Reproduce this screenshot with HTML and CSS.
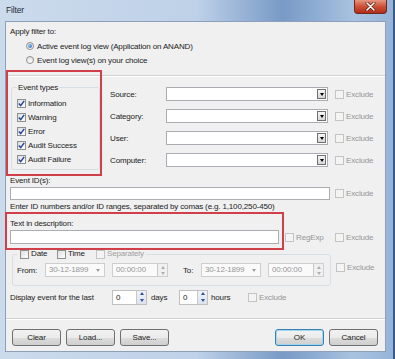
FILE: index.html
```html
<!DOCTYPE html>
<html>
	<head>
		<meta charset="utf-8" />
		<link rel="stylesheet" href="styles.css">
	</head>
	<body>
		<div class="window">
			<div class="titlebar">
				<span class="title">Filter</span>
				<span class="close">
					<svg width="11" height="9" viewBox="0 0 11 9">
						<path d="M2 1 L9 8 M9 1 L2 8" stroke="#5a1a10" stroke-width="3" stroke-linecap="round" />
						<path d="M2 1 L9 8 M9 1 L2 8" stroke="#ffffff" stroke-width="1.6" stroke-linecap="round" />
					</svg>
				</span>
			</div>

			<div class="client">
				<div class="apply">
					<div class="apply-label">Apply filter to:</div>
					<div class="radio-row"><span class="radio on"></span>Active event log view (Application on ANAND)</div>
					<div class="radio-row"><span class="radio"></span>Event log view(s) on your choice</div>
				</div>
				<div class="sep"></div>

				<div class="criteria">
					<fieldset class="types">
						<legend>Event types</legend>
						<div class="check-row"><span class="cb on"><svg width="7" height="7" viewBox="0 0 7 7"><path d="M0.8 3.6 L2.7 5.6 L6.2 0.9" /></svg></span>Information</div>
						<div class="check-row"><span class="cb on"><svg width="7" height="7" viewBox="0 0 7 7"><path d="M0.8 3.6 L2.7 5.6 L6.2 0.9" /></svg></span>Warning</div>
						<div class="check-row"><span class="cb on"><svg width="7" height="7" viewBox="0 0 7 7"><path d="M0.8 3.6 L2.7 5.6 L6.2 0.9" /></svg></span>Error</div>
						<div class="check-row"><span class="cb on"><svg width="7" height="7" viewBox="0 0 7 7"><path d="M0.8 3.6 L2.7 5.6 L6.2 0.9" /></svg></span>Audit Success</div>
						<div class="check-row"><span class="cb on"><svg width="7" height="7" viewBox="0 0 7 7"><path d="M0.8 3.6 L2.7 5.6 L6.2 0.9" /></svg></span>Audit Failure</div>
					</fieldset>

					<div class="fields">
						<div class="field-row">
							<span class="flabel">Source:</span>
							<span class="combo"><span class="drop"></span></span>
							<span class="excl"><span class="cb dis"></span>Exclude</span>
						</div>
						<div class="field-row">
							<span class="flabel">Category:</span>
							<span class="combo"><span class="drop"></span></span>
							<span class="excl"><span class="cb dis"></span>Exclude</span>
						</div>
						<div class="field-row">
							<span class="flabel">User:</span>
							<span class="combo"><span class="drop"></span></span>
							<span class="excl"><span class="cb dis"></span>Exclude</span>
						</div>
						<div class="field-row">
							<span class="flabel">Computer:</span>
							<span class="combo"><span class="drop"></span></span>
							<span class="excl"><span class="cb dis"></span>Exclude</span>
						</div>
					</div>
				</div>

				<div class="section">
					<div class="line-label id-label">Event ID(s):</div>
					<div class="input-row">
						<span class="textbox id-box"></span>
						<span class="excl"><span class="cb dis"></span>Exclude</span>
					</div>
					<div class="line-label">Enter ID numbers and/or ID ranges, separated by comas (e.g. 1,100,250-450)</div>
					<div class="line-label desc-label">Text in description:</div>
					<div class="input-row">
						<span class="textbox desc-box"></span>
						<span class="regexp"><span class="cb dis"></span>RegExp</span>
						<span class="excl"><span class="cb dis"></span>Exclude</span>
					</div>
				</div>

				<div class="date-row">
					<fieldset class="dates">
						<legend>
							<span class="leg-item w-date"><span class="cb"></span>Date</span>
							<span class="leg-item w-time"><span class="cb"></span>Time</span>
							<span class="leg-item muted"><span class="cb dis"></span>Separately</span>
						</legend>
						<div class="range-row">
							<span class="rlabel">From:</span>
							<span class="datebox">30-12-1899<span class="tri"></span></span>
							<span class="timebox">00:00:00<span class="spin gray"><span class="up"></span><span class="down"></span></span></span>
							<span class="rlabel to">To:</span>
							<span class="datebox">30-12-1899<span class="tri"></span></span>
							<span class="timebox">00:00:00<span class="spin gray"><span class="up"></span><span class="down"></span></span></span>
						</div>
					</fieldset>
					<span class="excl date-excl"><span class="cb dis"></span>Exclude</span>
				</div>

				<div class="last-row">
					<span class="last-label">Display event for the last</span>
					<span class="spinbox days">0<span class="spin"><span class="up"></span><span class="down"></span></span></span>
					<span class="unit">days</span>
					<span class="spinbox hours">0<span class="spin"><span class="up"></span><span class="down"></span></span></span>
					<span class="unit hours-unit">hours</span>
					<span class="excl muted-excl"><span class="cb dis"></span>Exclude</span>
				</div>

				<div class="sep sep-bottom"></div>

				<div class="buttons">
					<span class="button">Clear</span>
					<span class="button">Load...</span>
					<span class="button">Save...</span>
					<span class="spacer"></span>
					<span class="button default">OK</span>
					<span class="button">Cancel</span>
				</div>
			</div>

			<div class="mark mark-types"></div>
			<div class="mark mark-desc"></div>
		</div>
	</body>
</html>
```

FILE: styles.css
```css
html,
body {
	margin: 0;
	padding: 0;
}
body {
	width: 395px;
	height: 359px;
	overflow: hidden;
	font-family: 'Liberation Sans', Arial, sans-serif;
	font-size: 8px;
	letter-spacing: -0.15px;
	color: #222;
}
.window {
	position: relative;
	width: 395px;
	height: 359px;
	box-sizing: border-box;
	padding: 0 7px 7px 5px;
	display: flex;
	flex-direction: column;
	background: linear-gradient(
		to right,
		rgb(204, 219, 236) 0%,
		rgb(190, 209, 232) 50%,
		rgb(120, 154, 198) 72%,
		rgb(168, 194, 224) 90%,
		rgb(150, 180, 216) 100%
	);
	border-right: 2px solid rgb(60, 92, 140);
}
.titlebar {
	height: 21px;
	display: flex;
	align-items: flex-start;
}
.title {
	padding: 4px 0 0 1px;
	line-height: 12px;
	font-size: 8.5px;
	color: #1e2a3a;
}
.close {
	margin-left: auto;
	margin-right: -1px;
	width: 33px;
	height: 14px;
	box-sizing: border-box;
	display: flex;
	align-items: center;
	justify-content: center;
	border: 1px solid rgb(110, 40, 30);
	border-top: none;
	border-radius: 0 0 4px 4px;
	background: linear-gradient(rgb(230, 150, 130), rgb(205, 80, 55) 50%, rgb(180, 45, 25));
}

.client {
	flex: 1;
	box-sizing: border-box;
	border: 1px solid rgb(140, 160, 188);
	background-color: rgb(240, 240, 240);
	display: flex;
	flex-direction: column;
}

.apply {
	padding: 2px 0 0 4px;
}
.apply-label {
	line-height: 15px;
	height: 15px;
}
.radio-row {
	display: flex;
	align-items: center;
	height: 14px;
	padding-left: 16px;
}
.radio {
	width: 8px;
	height: 8px;
	box-sizing: border-box;
	border-radius: 50%;
	border: 1px solid rgb(140, 140, 140);
	background: linear-gradient(rgb(225, 225, 225), rgb(255, 255, 255));
	margin-right: 3px;
	display: flex;
	align-items: center;
	justify-content: center;
}
.radio.on::after {
	content: '';
	width: 4px;
	height: 4px;
	border-radius: 50%;
	background: radial-gradient(circle at 35% 35%, rgb(140, 200, 250), rgb(30, 90, 170));
}

.sep {
	margin-top: 8px;
	height: 1px;
	border-top: 1px solid rgb(208, 208, 208);
	background-color: #fff;
}

.criteria {
	display: flex;
	padding-left: 5px;
}
fieldset {
	margin: 0;
	border: 1px solid rgb(213, 223, 229);
	border-radius: 3px;
	box-sizing: border-box;
}
legend {
	padding: 0 1px;
	line-height: 13px;
	height: 13px;
}
.types {
	margin-top: 4px;
	width: 89px;
	padding: 2px 2px 3px 5px;
}
.check-row {
	display: flex;
	align-items: center;
	height: 14px;
	white-space: nowrap;
}
.cb {
	flex: none;
	width: 9px;
	height: 9px;
	box-sizing: border-box;
	border: 1px solid rgb(142, 143, 143);
	background: linear-gradient(135deg, rgb(220, 222, 226), rgb(255, 255, 255));
	margin-right: 2px;
	display: flex;
	align-items: center;
	justify-content: center;
}
.cb svg path {
	fill: none;
	stroke: rgb(40, 70, 150);
	stroke-width: 1.5;
}
.cb.dis {
	border-color: rgb(196, 196, 196);
	background: rgb(244, 244, 244);
}

.fields {
	margin-left: 10px;
	padding-top: 10px;
	display: flex;
	flex-direction: column;
	gap: 8px;
}
.field-row {
	display: flex;
	align-items: center;
	height: 14px;
}
.flabel {
	width: 56px;
}
.combo {
	width: 162px;
	height: 14px;
	box-sizing: border-box;
	border: 1px solid rgb(171, 173, 179);
	background-color: #fff;
	display: flex;
	justify-content: flex-end;
	align-items: center;
	padding-right: 1px;
}
.drop {
	width: 9px;
	height: 10px;
	box-sizing: border-box;
	border: 1px solid rgb(112, 112, 112);
	background: linear-gradient(rgb(245, 245, 245), rgb(214, 214, 214));
	display: flex;
	align-items: center;
	justify-content: center;
}
.drop::after {
	content: '';
	border-left: 2.5px solid transparent;
	border-right: 2.5px solid transparent;
	border-top: 3px solid #000;
}
.excl {
	display: flex;
	align-items: center;
	margin-left: 7px;
	color: rgb(150, 150, 150);
}

.section {
	padding-left: 4px;
}
.line-label {
	line-height: 13px;
	height: 13px;
	white-space: nowrap;
}
.id-label,
.desc-label {
	margin-top: 4px;
}
.input-row {
	display: flex;
	align-items: center;
}
.textbox {
	box-sizing: border-box;
	border: 1px solid rgb(171, 173, 179);
	background-color: #fff;
}
.id-box {
	width: 320px;
	height: 13px;
}
.id-box + .excl {
	margin-left: 5px;
}
.desc-box {
	width: 269px;
	height: 14px;
}
.regexp {
	width: 50px;
	margin-left: 6px;
	display: flex;
	align-items: center;
	color: rgb(150, 150, 150);
}
.regexp + .excl {
	margin-left: 0;
}

.date-row {
	display: flex;
	margin-top: 3px;
	padding-left: 6px;
}
.dates {
	width: 319px;
	padding: 2px 4px 8px 4px;
}
.dates legend {
	height: 14px;
	line-height: 14px;
	padding: 0 0 0 3px;
	display: flex;
	align-items: center;
}
.leg-item {
	display: flex;
	align-items: center;
}
.w-date {
	width: 37px;
}
.w-time {
	width: 39px;
}
.muted {
	color: rgb(160, 160, 160);
	padding-right: 2px;
}
.range-row {
	display: flex;
	align-items: center;
	height: 14px;
}
.rlabel {
	width: 28px;
}
.rlabel.to {
	width: 18px;
	margin-left: 15px;
}
.datebox,
.timebox {
	position: relative;
	box-sizing: border-box;
	height: 14px;
	line-height: 12px;
	border: 1px solid rgb(204, 206, 210);
	background-color: rgb(250, 250, 250);
	color: rgb(150, 150, 150);
	padding-left: 3px;
	display: flex;
	align-items: center;
}
.datebox {
	width: 60px;
	margin-right: 7px;
}
.timebox {
	width: 56px;
}
.tri {
	margin-left: auto;
	margin-right: 4px;
	border-left: 2.5px solid transparent;
	border-right: 2.5px solid transparent;
	border-top: 3px solid rgb(160, 160, 160);
}
.spin {
	margin-left: auto;
	width: 10px;
	height: 12px;
	box-sizing: border-box;
	border-left: 1px solid rgb(200, 200, 200);
	display: flex;
	flex-direction: column;
	align-items: center;
	justify-content: space-around;
	background: linear-gradient(rgb(240, 243, 248), rgb(220, 226, 236));
}
.up {
	border-left: 2.5px solid transparent;
	border-right: 2.5px solid transparent;
	border-bottom: 3px solid rgb(50, 80, 150);
}
.down {
	border-left: 2.5px solid transparent;
	border-right: 2.5px solid transparent;
	border-top: 3px solid rgb(50, 80, 150);
}
.spin.gray {
	background: rgb(240, 240, 240);
}
.spin.gray .up {
	border-bottom-color: rgb(175, 175, 175);
}
.spin.gray .down {
	border-top-color: rgb(175, 175, 175);
}
.date-excl {
	align-self: flex-start;
	margin-top: 16px;
	margin-left: 5px;
}

.last-row {
	display: flex;
	align-items: center;
	height: 16px;
	margin-top: 3px;
	padding-left: 4px;
}
.last-label {
	width: 102px;
}
.spinbox {
	box-sizing: border-box;
	height: 15px;
	border: 1px solid rgb(190, 192, 196);
	background-color: #fff;
	display: flex;
	align-items: center;
	padding-left: 3px;
}
.spinbox .spin {
	height: 13px;
}
.days {
	width: 35px;
}
.hours {
	width: 29px;
}
.unit {
	width: 28px;
	margin-left: 4px;
}
.hours-unit {
	width: 37px;
	margin-left: 3px;
}
.muted-excl {
	margin-left: 0;
}

.sep-bottom {
	margin-top: 13px;
}

.buttons {
	display: flex;
	gap: 5px;
	margin-top: 9px;
	padding: 0 7px 0 6px;
}
.spacer {
	flex: 1;
}
.button {
	width: 49px;
	height: 17px;
	box-sizing: border-box;
	border: 1px solid rgb(112, 112, 112);
	border-radius: 3px;
	background: linear-gradient(rgb(242, 242, 242) 0%, rgb(235, 235, 235) 50%, rgb(221, 221, 221) 51%, rgb(207, 207, 207) 100%);
	display: flex;
	align-items: center;
	justify-content: center;
}
.button.default {
	border-color: rgb(60, 127, 177);
	box-shadow: inset 0 0 0 1px rgb(160, 215, 240);
}

.mark {
	position: absolute;
	box-sizing: border-box;
	border: 2px solid rgb(208, 64, 74);
}
.mark-types {
	left: 6px;
	top: 70px;
	width: 96px;
	height: 106px;
}
.mark-desc {
	left: 5px;
	top: 212px;
	width: 279px;
	height: 38px;
}
```
